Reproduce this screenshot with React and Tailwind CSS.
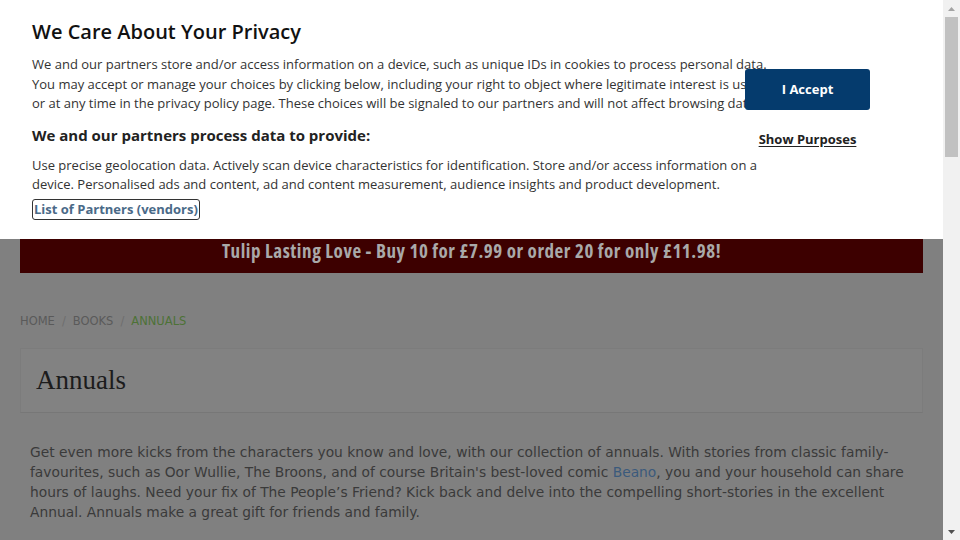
import { useState } from "react";

const bodyFont = "font-['DejaVu_Sans',sans-serif]";

function Scrollbar() {
  return (
    <div className="flex w-[17px] shrink-0 flex-col items-center bg-[#f1f1f1]">
      <div className="flex h-[17px] w-full items-center justify-center">
        <svg width="7" height="4" viewBox="0 0 7 4">
          <path d="M0 4 L3.5 0 L7 4 Z" fill="#a3a3a3" />
        </svg>
      </div>
      <div className="h-[140px] w-[13px] bg-[#c1c1c1]" />
      <div className="flex-1" />
      <div className="flex h-[17px] w-full items-center justify-center">
        <svg width="7" height="4" viewBox="0 0 7 4">
          <path d="M0 0 L7 0 L3.5 4 Z" fill="#505050" />
        </svg>
      </div>
    </div>
  );
}

function ConsentBanner() {
  return (
    <div className="absolute inset-x-0 top-0 h-[239px] bg-white font-['Open_Sans',sans-serif] text-[#333]">
      <div className="relative px-8 pt-[19px]">
        <h2 className="text-[20px] font-semibold leading-[26px] text-[#111]">We Care About Your Privacy</h2>
        <p className="mt-[10px] w-[740px] text-[13px] leading-[19.5px]">
          We and our partners store and/or access information on a device, such as unique IDs in cookies to process personal data. You may accept or manage your choices by clicking below, including your right to object where legitimate interest is used, or at any time in the privacy policy page. These choices will be signaled to our partners and will not affect browsing data.
        </p>
        <h3 className="mt-[11px] text-[15px] font-bold leading-[20px] text-[#222]">
          We and our partners process data to provide:
        </h3>
        <p className="mt-[11px] w-[740px] text-[13px] leading-[19px]">
          Use precise geolocation data. Actively scan device characteristics for identification. Store and/or access information on a device. Personalised ads and content, ad and content measurement, audience insights and product development.
        </p>
        <button className="mt-[5px] rounded-[3px] border border-[#333] px-px text-[13px] font-bold leading-[19px] text-[#4a6a88]">
          List of Partners (vendors)
        </button>

        <div className="absolute left-[745px] top-[69px] flex w-[125px] flex-col items-center">
          <button className="h-[41px] w-full rounded-[3px] bg-[#053b6d] text-[13px] font-bold text-white">
            I Accept
          </button>
          <button className="mt-[20px] text-[13px] font-bold text-[#222] underline underline-offset-2">
            Show Purposes
          </button>
        </div>
      </div>
    </div>
  );
}

export default function App() {
  const [accepted] = useState(false);

  return (
    <div className="flex h-[540px] w-[960px] overflow-hidden bg-[#808080]">
      <div className="relative flex-1 overflow-hidden">
        <div className="px-5">
          <div className="h-[229px]" />
          <div className="flex h-[44px] items-center justify-center bg-[#3d0000] font-['Open_Sans',sans-serif] text-[19px] font-bold tracking-[0.55px] text-[#a9a9a9] [font-stretch:80%]">
            Tulip Lasting Love - Buy 10 for £7.99 or order 20 for only £11.98!
          </div>

          <nav className={`mt-[41px] flex items-center gap-[7px] text-[11.5px] leading-[14px] ${bodyFont}`}>
            <span className="text-[#5a5a5a]">HOME</span>
            <span className="text-[#6e6e6e]">/</span>
            <span className="text-[#5a5a5a]">BOOKS</span>
            <span className="text-[#6e6e6e]">/</span>
            <span className="text-[#4d7236]">ANNUALS</span>
          </nav>

          <div className="mt-[20px] flex h-[65px] items-center border border-[#7c7c7c] border-b-[#777] bg-[#828282] px-[15px]">
            <h1 className="font-['Liberation_Serif',serif] text-[27px] leading-none text-[#1c1c1c]">Annuals</h1>
          </div>

          <p className={`mt-[29px] px-[10px] text-[13.8px] leading-[20px] text-[#3a3a3a] ${bodyFont}`}>
            Get even more kicks from the characters you know and love, with our collection of annuals. With stories from classic family-favourites, such as Oor Wullie, The Broons, and of course Britain's best-loved comic{" "}
            <a className="text-[#3b5a7c]">Beano</a>, you and your household can share hours of laughs. Need your fix of The People’s Friend? Kick back and delve into the compelling short-stories in the excellent Annual. Annuals make a great gift for friends and family.
          </p>
        </div>

        {!accepted && <ConsentBanner />}
      </div>
      <Scrollbar />
    </div>
  );
}
